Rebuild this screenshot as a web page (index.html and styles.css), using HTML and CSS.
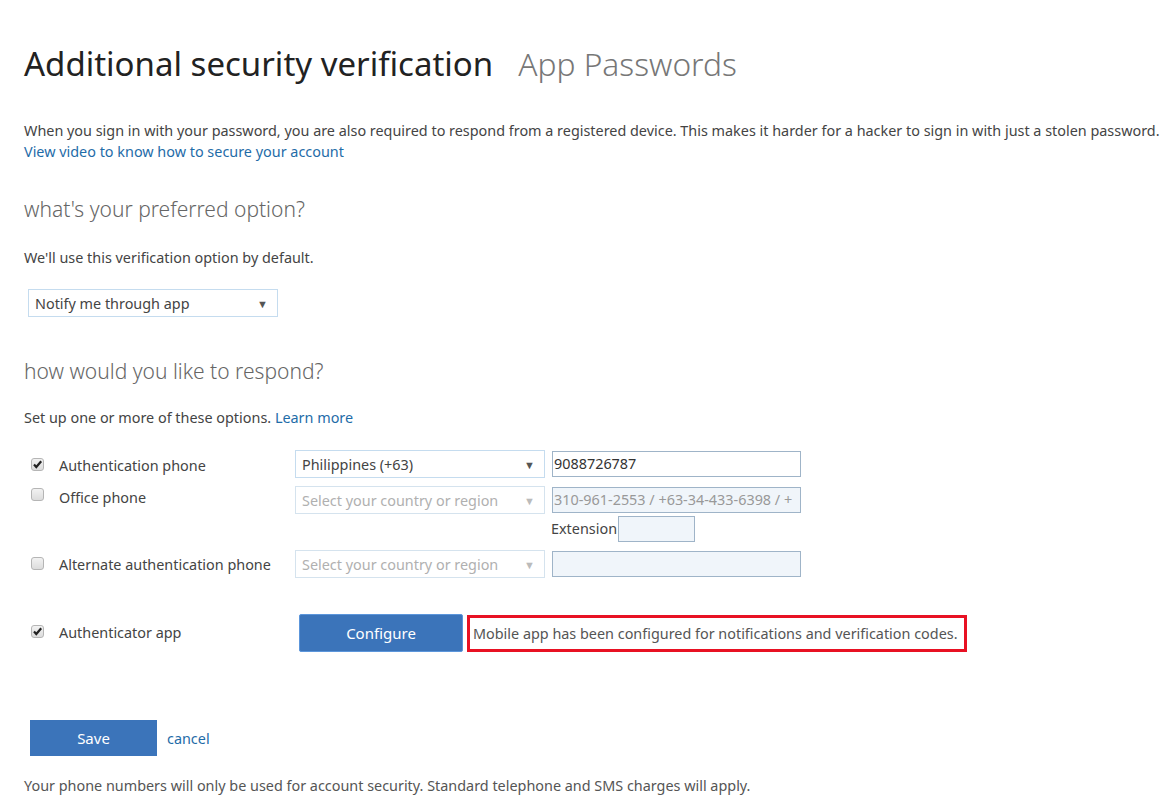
FILE: index.html
```html
<!DOCTYPE html>
<html lang="en">
<head>
<meta charset="utf-8">
<title>Additional security verification</title>
<link rel="stylesheet" href="styles.css">
</head>
<body>
<div class="page">
  <div class="titles">
    <h1 class="title">Additional security verification</h1>
    <span class="subtitle">App Passwords</span>
  </div>
  <p class="intro">When you sign in with your password, you are also required to respond from a registered device. This makes it harder for a hacker to sign in with just a stolen password.<br><a class="link" href="#">View video to know how to secure your account</a></p>

  <h2 class="section">what's your preferred option?</h2>
  <p class="text">We'll use this verification option by default.</p>
  <div class="select pref"><span>Notify me through app</span><span class="arrow">&#9660;</span></div>

  <h2 class="section second">how would you like to respond?</h2>
  <p class="text setup">Set up one or more of these options. <a class="link" href="#">Learn more</a></p>

  <div class="options">
    <div class="opt row1">
      <span class="cb checked"><svg viewBox="0 0 13 13" width="13" height="13"><path d="M3 6.5 L5.3 9 L10.2 3.3" fill="none" stroke="#222" stroke-width="2.2"/></svg></span>
      <span class="label">Authentication phone</span>
      <div class="select country"><span>Philippines (+63)</span><span class="arrow">&#9660;</span></div>
      <div class="input">9088726787</div>
    </div>
    <div class="opt row2">
      <span class="cb"></span>
      <span class="label">Office phone</span>
      <div class="select country disabled"><span>Select your country or region</span><span class="arrow">&#9660;</span></div>
      <div class="input disabled">310-961-2553 / +63-34-433-6398 / +</div>
    </div>
    <div class="ext">
      <span class="ext-label">Extension</span><div class="input small disabled"></div>
    </div>
    <div class="opt row3">
      <span class="cb"></span>
      <span class="label">Alternate authentication phone</span>
      <div class="select country disabled"><span>Select your country or region</span><span class="arrow">&#9660;</span></div>
      <div class="input disabled"></div>
    </div>
    <div class="opt row4">
      <span class="cb checked"><svg viewBox="0 0 13 13" width="13" height="13"><path d="M3 6.5 L5.3 9 L10.2 3.3" fill="none" stroke="#222" stroke-width="2.2"/></svg></span>
      <span class="label">Authenticator app</span>
      <button class="btn configure">Configure</button>
      <span class="status">Mobile app has been configured for notifications and verification codes.</span>
    </div>
  </div>

  <div class="actions">
    <button class="btn save">Save</button>
    <a class="link cancel" href="#">cancel</a>
  </div>
  <p class="text footer">Your phone numbers will only be used for account security. Standard telephone and SMS charges will apply.</p>
</div>
</body>
</html>
```
FILE: styles.css
```css
html, body {
  margin: 0;
  padding: 0;
  background: #fff;
}
body {
  font-family: "Noto Sans", "Open Sans", "Liberation Sans", sans-serif;
  color: #444;
  font-size: 14.4px;
}
.page {
  padding: 38px 0 0 24px;
}
.titles {
  display: flex;
  align-items: baseline;
  gap: 25px;
  height: 52px;
}
.title {
  margin: 0;
  font-size: 33px;
  font-weight: 400;
  color: #222;
  line-height: 52px;
}
.subtitle {
  font-size: 31.7px;
  font-weight: 300;
  color: #777;
  line-height: 52px;
}
.intro {
  margin: 30px 0 0 0;
  line-height: 21px;
}
.link {
  color: #1f6ca8;
  text-decoration: none;
}
.section {
  margin: 32px 0 0 0;
  font-size: 21px;
  font-weight: 300;
  color: #666;
  line-height: 30px;
}
.section.second {
  margin-top: 39px;
}
.text {
  margin: 24px 0 0 0;
  line-height: 20px;
}
.text.setup {
  margin-top: 22px;
}
.select {
  box-sizing: border-box;
  display: flex;
  align-items: center;
  justify-content: space-between;
  border: 1px solid #c5dcef;
  background: #fff;
  padding: 0 9px 0 6px;
  color: #444;
}
.select .arrow {
  font-size: 11px;
  color: #555;
}
.pref {
  margin: 21px 0 0 4px;
  width: 250px;
  height: 28px;
}
.options {
  margin-top: 22px;
  display: flex;
  flex-direction: column;
}
.opt {
  display: flex;
  align-items: flex-start;
}
.cb {
  box-sizing: border-box;
  width: 13px;
  height: 13px;
  margin: 8px 15px 0 7px;
  border: 1px solid #b5b5b5;
  border-radius: 3px;
  background: linear-gradient(#f2f2f2, #dcdcdc);
  display: flex;
  align-items: center;
  justify-content: center;
  flex: none;
}
.cb svg {
  display: block;
  margin: -1px;
}
.label {
  width: 236px;
  line-height: 20px;
  padding-top: 6px;
  flex: none;
}
.country {
  width: 250px;
  height: 28px;
  flex: none;
}
.select.disabled {
  border-color: #d5e3ee;
  color: #b0b0b0;
}
.select.disabled .arrow {
  color: #bbb;
}
.input {
  box-sizing: border-box;
  margin-left: 7px;
  margin-top: 1px;
  width: 249px;
  height: 26px;
  border: 1px solid #9fb4c8;
  padding: 0 0 0 1px;
  line-height: 24px;
  white-space: nowrap;
  overflow: hidden;
  color: #333;
  flex: none;
}
.input.disabled {
  background: #f0f5fa;
  color: #999;
}
.row2 {
  margin-top: 8px;
}
.row2 .cb {
  margin-top: 2px;
}
.row2 .label {
  padding-top: 2px;
}
.ext {
  display: flex;
  align-items: center;
  margin: 2px 0 0 527px;
}
.ext-label {
  line-height: 20px;
}
.input.small {
  width: 77px;
  margin: 0 0 0 1px;
}
.row3 {
  margin-top: 8px;
}
.row3 .label {
  padding-top: 5px;
}
.row3 .cb {
  margin-top: 7px;
}
.row4 {
  margin-top: 36px;
  align-items: center;
}
.row4 .cb {
  margin-top: -4px;
}
.row4 .label {
  padding-top: 0;
  width: 240px;
}
.btn {
  font-family: inherit;
  font-size: 15px;
  color: #fff;
  background: #3b74ba;
  border: 1px solid #5c96db;
  border-radius: 2px;
  cursor: pointer;
}
.configure {
  width: 164px;
  height: 38px;
}
.status {
  margin-left: 4px;
  border: 3px solid #e81123;
  height: 37px;
  box-sizing: border-box;
  width: 500px;
  display: flex;
  align-items: center;
  padding-left: 3px;
  color: #555;
  white-space: nowrap;
}
.actions {
  margin: 68px 0 0 6px;
  display: flex;
  align-items: center;
  gap: 10px;
}
.save {
  width: 127px;
  height: 36px;
  border: none;
  border-radius: 0;
}
.footer {
  margin-top: 20px;
  color: #555;
}
```
